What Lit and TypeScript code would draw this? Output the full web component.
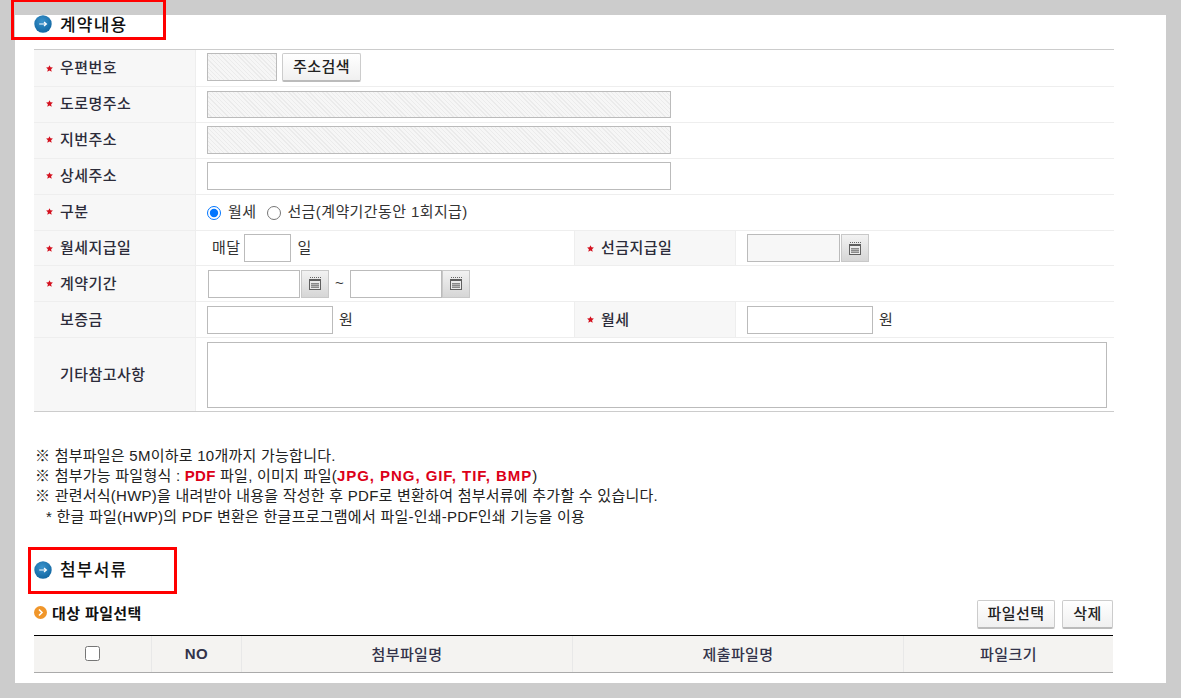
import { LitElement, html, css, svg } from "lit";
import { customElement } from "lit/decorators.js";

const star = html`<svg class="star" width="7" height="7" viewBox="0 0 7 7"><path d="M3.5 0.2 4.5 2.3 6.9 2.5 5.1 4.2 5.7 6.8 3.5 5.5 1.3 6.8 1.9 4.2 0.1 2.5 2.5 2.3Z" fill="#d4101e"/></svg>`;

const calIcon = html`<svg width="14" height="15" viewBox="0 0 14 15">
  <path d="M2 1.5H13" stroke="#666" stroke-width="1" stroke-dasharray="1 1"/>
  <rect x="1" y="3" width="12" height="11" fill="#5f5f5f"/>
  <rect x="2" y="5" width="10" height="8" fill="#ececec"/>
  <rect x="3" y="7" width="8" height="5" fill="#8a8a8a"/>
  <path d="M3 8.5H11M3 10.5H11" stroke="#b5b5b5" stroke-width="1"/>
</svg>`;

const blueIcon = svg`<svg class="ico" width="18" height="18" viewBox="0 0 18 18">
  <defs><radialGradient id="bl" cx="45%" cy="35%" r="70%"><stop offset="0" stop-color="#3a93cc"/><stop offset="1" stop-color="#0f649f"/></radialGradient></defs>
  <circle cx="9" cy="9" r="8.7" fill="url(#bl)"/>
  <path d="M5.2 9H12.2M10 7 12.4 9 10 11" fill="none" stroke="#fff" stroke-width="1.2"/>
</svg>`;

const orangeIcon = svg`<svg width="13" height="13" viewBox="0 0 13 13">
  <circle cx="6.5" cy="6.5" r="6.5" fill="#f0962a"/>
  <path d="M5 3.5 8 6.5 5 9.5" fill="none" stroke="#fff" stroke-width="1.6"/>
</svg>`;

@customElement("app-root")
export class AppRoot extends LitElement {
  static styles = css`
    :host {
      display: block;
      height: 698px;
      box-sizing: border-box;
      padding: 15px;
      background: #cccccc;
      overflow: hidden;
      font-family: "Liberation Sans", "Noto Sans CJK KR", sans-serif;
      color: #222;
      font-size: 15px;
      position: relative;
    }
    .panel {
      background: #fff;
      height: 668px;
      box-sizing: border-box;
      padding: 0 52px 0 19px;
    }
    .title {
      display: flex;
      align-items: center;
      gap: 8px;
      height: 18px;
      font-size: 17px;
      font-weight: 500;
      color: #111;
      letter-spacing: 1.2px;
    }
    .title span { margin-bottom: 2px; }
    .title.first { margin-bottom: 16px; }
    .form {
      width: 1080px;
      border-collapse: separate;
      border-spacing: 0;
      table-layout: fixed;
      border-top: 1px solid #ccc;
      border-bottom: 1px solid #ccc;
    }
    .form th, .form td {
      padding: 0;
      border-bottom: 1px solid #eee;
      vertical-align: middle;
    }
    .form tr:last-child th, .form tr:last-child td { border-bottom: 0; }
    .form th {
      background: #f7f7f7;
      border-right: 1px solid #eee;
      text-align: left;
      font-weight: 500;
      font-size: 15px;
      letter-spacing: 0.45px;
      color: #2c2c3a;
    }
    .form th.second { border-left: 1px solid #eee; }
    .lab { display: flex; align-items: center; padding-left: 12px; padding-bottom: 3px; }
    .lab.hi { padding-bottom: 5px; }
    .star-slot { width: 14px; flex: none; display: flex; align-items: center; margin-top: 3px; }
    .star { display: block; }
    .val {
      display: flex;
      align-items: center;
      padding-left: 11px;
      color: #333;
      font-size: 15px;
      letter-spacing: 0.4px;
    }
    .val.up { margin-bottom: 2px; }
    .val span.t { margin-bottom: 3px; }
    .val span.t.hi { margin-bottom: 5px; }
    .box {
      box-sizing: border-box;
      height: 28px;
      border: 1px solid #bbb;
      background: #fff;
      display: block;
      padding: 0;
      margin: 0;
    }
    .hatch {
      background: repeating-linear-gradient(45deg, #f6f6f6 0 2px, #ebebeb 2px 3px);
    }
    .h27 { height: 27px; }
    .w70 { width: 70px; }
    .w464 { width: 464px; }
    .w47 { width: 47px; }
    .w92 { width: 92px; }
    .w93 { width: 93px; }
    .w126 { width: 126px; }
    .area { width: 900px; height: 66px; resize: none; }
    .grey { background: #f7f7f7; }
    .btn {
      box-sizing: border-box;
      height: 29px;
      border: 1px solid #ccc;
      border-bottom: 2px solid #bbb;
      border-radius: 2px;
      background: linear-gradient(#fff, #f0f0f0);
      font: inherit;
      font-size: 15px;
      font-weight: 500;
      color: #222;
      letter-spacing: 0.4px;
      padding: 0 0 2px;
      display: block;
    }
    .btn.addr { width: 79px; margin-left: 5px; }
    .btn.pick { width: 78px; }
    .btn.del { width: 51px; }
    .cal {
      box-sizing: border-box;
      width: 28px;
      height: 28px;
      border: 1px solid #c8c8c8;
      background: linear-gradient(#f2f2f2, #d6d6d6);
      display: flex;
      align-items: center;
      justify-content: center;
      flex: none;
    }
    .ml1 { margin-left: 1px; }
    .tilde { width: 21px; text-align: center; display: block; letter-spacing: 0; }
    .radio { margin: 0; width: 14px; height: 14px; flex: none; }
    .rt { margin: 0 11px 0 7px; }
    .r2 { margin: 0 0 0 6px; }
    .unit { margin-left: 6px; }
    .mon { margin: 0 4px 3px 5px; }
    .notes {
      margin: 34px 0 0 1px;
      font-size: 15px;
      line-height: 20.2px;
      color: #222;
      letter-spacing: 0.25px;
    }
    .notes div { white-space: nowrap; }
    .notes .ind { padding-left: 11px; }
    .notes b { color: #dc0018; font-weight: 700; font-size: 15px; letter-spacing: 0.3px; }
    .notes b.wide { letter-spacing: 0.95px; }
    .title.second { margin-top: 34px; }
    .subhead {
      display: flex;
      align-items: center;
      justify-content: space-between;
      width: 1079px;
      margin-top: 21px;
      height: 29px;
    }
    .sub {
      display: flex;
      align-items: center;
      gap: 5px;
      font-size: 15px;
      font-weight: 700;
      color: #111;
      letter-spacing: 0.4px;
      margin-top: -4px;
    }
    .btns { display: flex; gap: 7px; }
    .files {
      width: 1079px;
      margin-top: 6px;
      border-collapse: separate;
      border-spacing: 0;
      table-layout: fixed;
      border-top: 1px solid #000;
      border-bottom: 1px solid #aaa;
    }
    .files th {
      height: 36px;
      padding: 0;
      background: #f4f3f1;
      border-right: 1px solid #e8e8e8;
      font-size: 15px;
      font-weight: 500;
      letter-spacing: 0.4px;
      color: #33334a;
      vertical-align: middle;
    }
    .files th.no { font-weight: 700; }
    .files th:last-child { border-right: 0; }
    .chk { display: block; margin: 0 auto; width: 15px; height: 15px; }
    .mark {
      position: absolute;
      box-sizing: border-box;
      border: 3px solid #ff0000;
    }
    .m1 { left: 11px; top: -1px; width: 155px; height: 41px; }
    .m2 { left: 28px; top: 547px; width: 149px; height: 47px; }
  `;

  private row(h: number, a: unknown, b: unknown) {
    return html`<tr>
      <th style="height:${h}px">${a}</th>
      <td colspan="3" style="height:${h}px">${b}</td>
    </tr>`;
  }

  private lab(text: string, req = true, hi = false) {
    return html`<div class="lab ${hi ? "hi" : ""}"><span class="star-slot">${req ? star : ""}</span>${text}</div>`;
  }

  render() {
    return html`
      <div class="panel">
        <div class="title first">${blueIcon}<span>계약내용</span></div>
        <table class="form">
          <colgroup>
            <col style="width:162px" /><col style="width:378px" /><col style="width:162px" /><col />
          </colgroup>
          ${this.row(36, this.lab("우편번호"), html`<div class="val up"><span class="box hatch w70"></span><button class="btn addr">주소검색</button></div>`)}
          ${this.row(35, this.lab("도로명주소", true, true), html`<div class="val"><span class="box hatch w464 h27"></span></div>`)}
          ${this.row(35, this.lab("지번주소", true, true), html`<div class="val up"><span class="box hatch w464"></span></div>`)}
          ${this.row(35, this.lab("상세주소", true, true), html`<div class="val up"><input class="box w464" /></div>`)}
          ${this.row(35, this.lab("구분", true, true), html`<div class="val">
            <input class="radio" type="radio" name="k" checked /><span class="t hi rt">월세</span>
            <input class="radio" type="radio" name="k" /><span class="t hi r2">선금(계약기간동안 1회지급)</span>
          </div>`)}
          <tr>
            <th style="height:34px">${this.lab("월세지급일")}</th>
            <td><div class="val"><span class="mon">매달</span><input class="box w47" /><span class="t unit">일</span></div></td>
            <th class="second">${this.lab("선금지급일")}</th>
            <td><div class="val"><input class="box w93 grey" /><span class="cal ml1">${calIcon}</span></div></td>
          </tr>
          ${this.row(35, this.lab("계약기간"), html`<div class="val">
            <input class="box w92 ml1" /><span class="cal ml1">${calIcon}</span>
            <span class="t tilde">~</span>
            <input class="box w92" /><span class="cal">${calIcon}</span>
          </div>`)}
          <tr>
            <th style="height:35px">${this.lab("보증금", false)}</th>
            <td><div class="val"><input class="box w126" /><span class="t unit">원</span></div></td>
            <th class="second">${this.lab("월세")}</th>
            <td><div class="val"><input class="box w126" /><span class="t unit">원</span></div></td>
          </tr>
          ${this.row(73, this.lab("기타참고사항", false), html`<div class="val"><textarea class="box area"></textarea></div>`)}
        </table>

        <div class="notes">
          <div>※ 첨부파일은 5M이하로 10개까지 가능합니다.</div>
          <div>※ 첨부가능 파일형식 : <b>PDF</b> 파일, 이미지 파일(<b class="wide">JPG, PNG, GIF, TIF, BMP</b>)</div>
          <div>※ 관련서식(HWP)을 내려받아 내용을 작성한 후 PDF로 변환하여 첨부서류에 추가할 수 있습니다.</div>
          <div class="ind">* 한글 파일(HWP)의 PDF 변환은 한글프로그램에서 파일-인쇄-PDF인쇄 기능을 이용</div>
        </div>

        <div class="title second">${blueIcon}<span>첨부서류</span></div>

        <div class="subhead">
          <div class="sub">${orangeIcon}<span>대상 파일선택</span></div>
          <div class="btns"><button class="btn pick">파일선택</button><button class="btn del">삭제</button></div>
        </div>

        <table class="files">
          <colgroup>
            <col style="width:118px" /><col style="width:90px" /><col style="width:331px" /><col style="width:331px" /><col />
          </colgroup>
          <tr>
            <th><input class="chk" type="checkbox" /></th>
            <th class="no">NO</th>
            <th>첨부파일명</th>
            <th>제출파일명</th>
            <th>파일크기</th>
          </tr>
        </table>
      </div>
      <div class="mark m1"></div>
      <div class="mark m2"></div>
    `;
  }
}
